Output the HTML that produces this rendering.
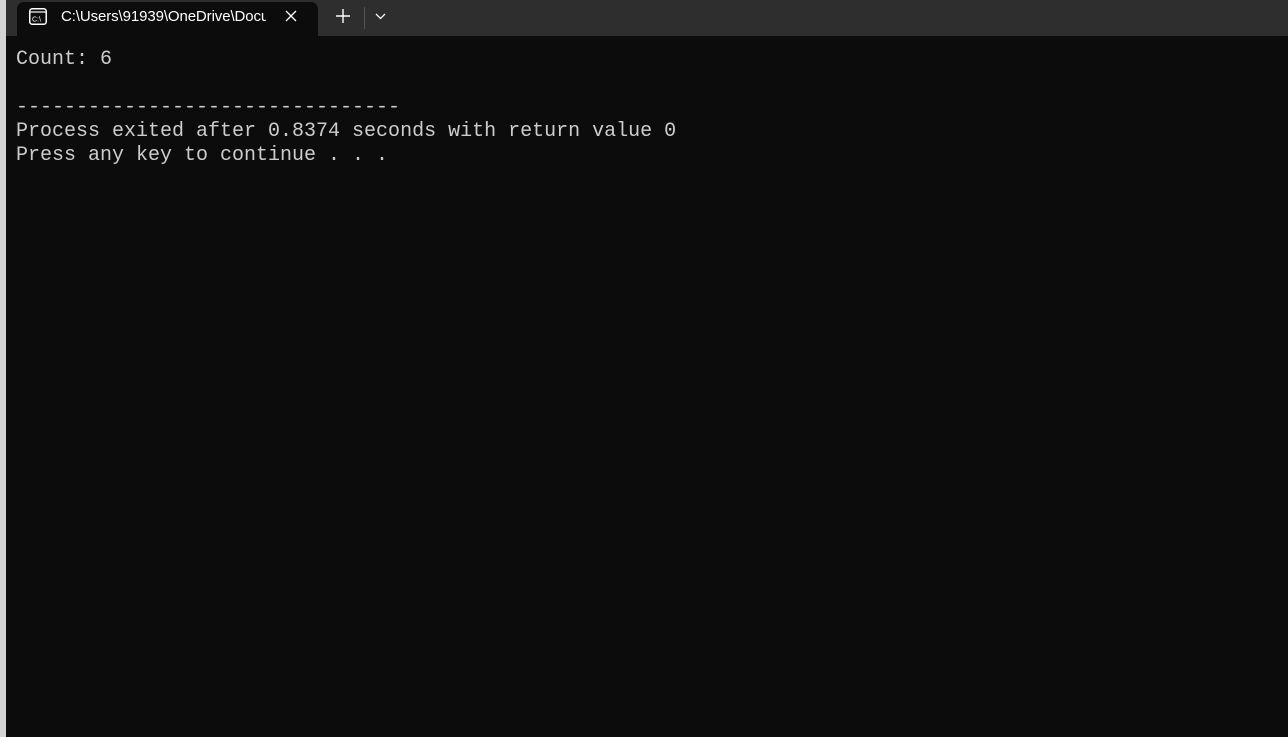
<!DOCTYPE html>
<html><head><style>
html,body{margin:0;padding:0;width:1288px;height:737px;overflow:hidden;background:#0c0c0c;}
#strip{position:absolute;left:0;top:0;width:6px;height:737px;background:#d4d4d4;}
#bar{position:absolute;left:6px;top:0;width:1282px;height:36px;background:#2e2e2e;}
#tab{position:absolute;left:17px;top:2px;width:301px;height:34px;background:#0c0c0c;border-radius:7px 7px 0 0;}
#title{position:absolute;left:61px;top:8px;font:15px "Liberation Sans",sans-serif;font-weight:500;color:#fff;white-space:nowrap;width:205px;overflow:hidden;letter-spacing:-0.1px;}
#term{position:absolute;left:6px;top:36px;width:1282px;height:701px;background:#0c0c0c;}
pre{position:absolute;left:16px;top:48px;margin:0;font:20px/24px "Liberation Mono",monospace;color:#cccccc;}
</style></head><body>
<div id="strip"></div>
<div id="bar"></div>
<div id="term"></div>
<div id="tab"></div>
<svg style="position:absolute;left:29px;top:8px" width="18" height="17" viewBox="0 0 18 17"><rect x="0.75" y="0.75" width="16.5" height="15.5" rx="2.5" fill="none" stroke="#fff" stroke-width="1.5"/><line x1="1" y1="4" x2="17" y2="4" stroke="#fff" stroke-width="1.2"/><text x="3" y="13.5" font-family="Liberation Sans" font-size="7" fill="#fff">C:\</text></svg>
<div id="title">C:\Users\91939\OneDrive\Documents</div>
<svg style="position:absolute;left:285px;top:10px" width="12" height="12"><path d="M1 1L11 11M11 1L1 11" stroke="#fff" stroke-width="1.3"/></svg>
<svg style="position:absolute;left:336px;top:9px" width="14" height="14"><path d="M7 0V14M0 7H14" stroke="#fff" stroke-width="1.4"/></svg>
<div style="position:absolute;left:364px;top:7px;width:1px;height:22px;background:#555"></div>
<svg style="position:absolute;left:375px;top:13px" width="11" height="7"><path d="M1 1L5.5 5.5L10 1" fill="none" stroke="#fff" stroke-width="1.3"/></svg>
<pre>Count: 6

--------------------------------
Process exited after 0.8374 seconds with return value 0
Press any key to continue . . .</pre>
</body></html>
